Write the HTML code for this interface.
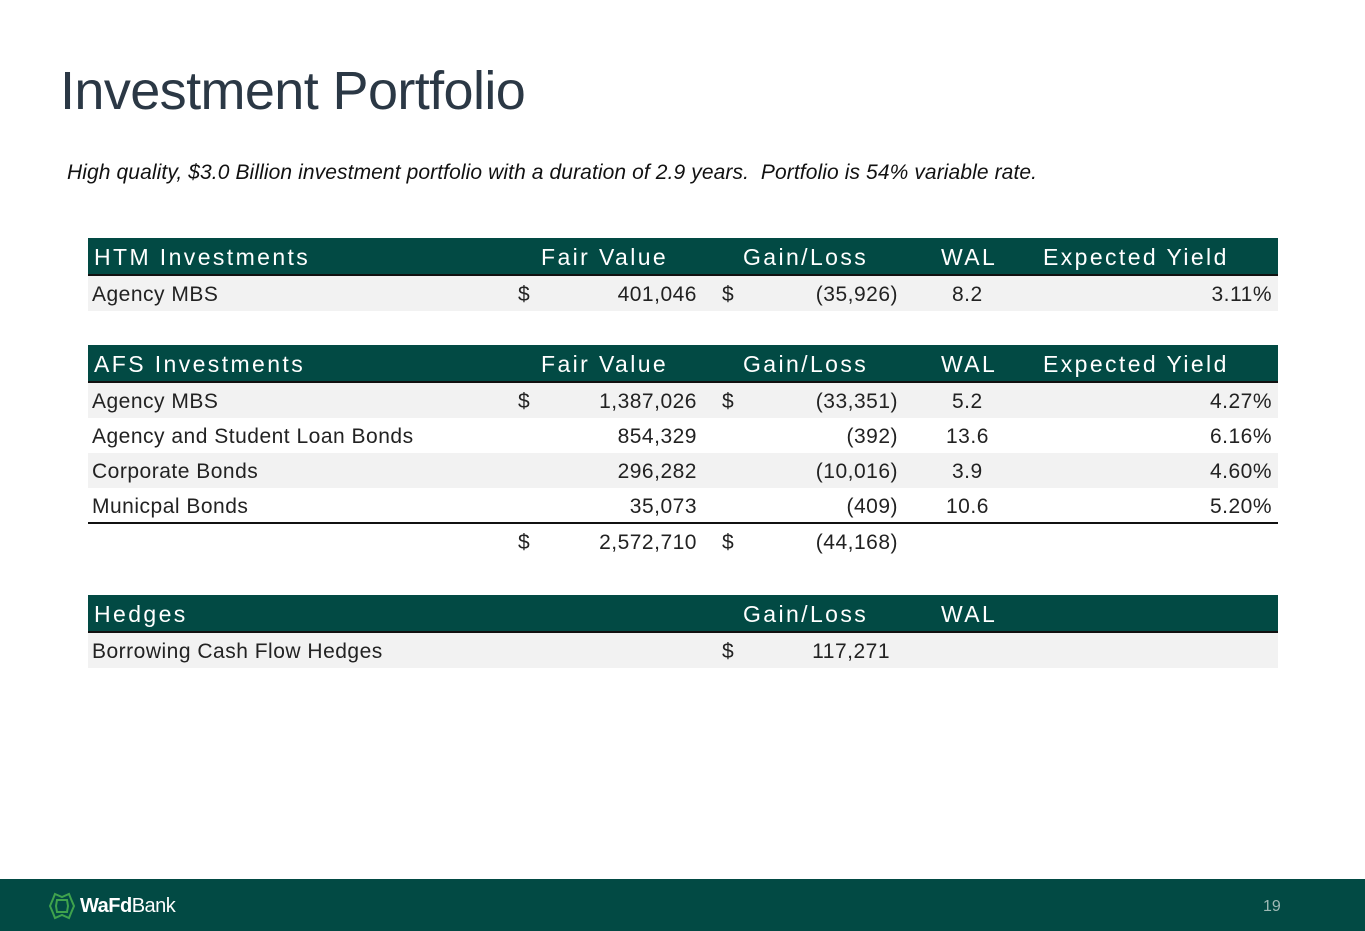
<!DOCTYPE html>
<html><head><style>
body{margin:0;width:1365px;height:931px;background:#fff;position:relative;overflow:hidden;font-family:"Liberation Sans",sans-serif;}
.a{position:absolute;white-space:nowrap;}
.h{position:absolute;left:88px;width:1190px;height:36px;background:#024a44;border-bottom:2px solid #111;}
.h span{position:absolute;top:6px;color:#fff;font-size:23px;letter-spacing:2.4px;}
.r{position:absolute;left:88px;width:1190px;height:35px;}
.g{background:#f2f2f2;}
.r span{position:absolute;top:7px;font-size:21px;color:#222;letter-spacing:0.5px;}
</style></head><body>
<div class="a" style="left:60px;top:60px;font-size:54px;color:#2b3845;letter-spacing:-0.6px;">Investment Portfolio</div>
<div class="a" style="left:67px;top:161px;font-size:21px;font-style:italic;color:#111;letter-spacing:0.1px;">High quality, $3.0 Billion investment portfolio with a duration of 2.9 years.&nbsp; Portfolio is 54% variable rate.</div>

<div class="h" style="top:238px"><span style="left:6px">HTM Investments</span><span style="left:453px">Fair Value</span><span style="left:655px">Gain/Loss</span><span style="left:853px">WAL</span><span style="left:955px">Expected Yield</span></div>
<div class="r g" style="top:276px"><span style="left:4px">Agency MBS</span><span style="left:430px">$</span><span style="right:581px">401,046</span><span style="left:634px">$</span><span style="right:380px">(35,926)</span><span style="left:864px">8.2</span><span style="right:6px">3.11%</span></div>

<div class="h" style="top:345px"><span style="left:6px">AFS Investments</span><span style="left:453px">Fair Value</span><span style="left:655px">Gain/Loss</span><span style="left:853px">WAL</span><span style="left:955px">Expected Yield</span></div>
<div class="r g" style="top:383px"><span style="left:4px">Agency MBS</span><span style="left:430px">$</span><span style="right:581px">1,387,026</span><span style="left:634px">$</span><span style="right:380px">(33,351)</span><span style="left:864px">5.2</span><span style="right:6px">4.27%</span></div>
<div class="r" style="top:418px"><span style="left:4px">Agency and Student Loan Bonds</span><span style="right:581px">854,329</span><span style="right:380px">(392)</span><span style="left:858px">13.6</span><span style="right:6px">6.16%</span></div>
<div class="r g" style="top:453px"><span style="left:4px">Corporate Bonds</span><span style="right:581px">296,282</span><span style="right:380px">(10,016)</span><span style="left:864px">3.9</span><span style="right:6px">4.60%</span></div>
<div class="r" style="top:488px;border-bottom:2px solid #111;height:34px"><span style="left:4px">Municpal Bonds</span><span style="right:581px">35,073</span><span style="right:380px">(409)</span><span style="left:858px">10.6</span><span style="right:6px">5.20%</span></div>
<div class="r" style="top:524px"><span style="left:430px">$</span><span style="right:581px">2,572,710</span><span style="left:634px">$</span><span style="right:380px">(44,168)</span></div>

<div class="h" style="top:595px"><span style="left:6px">Hedges</span><span style="left:655px">Gain/Loss</span><span style="left:853px">WAL</span></div>
<div class="r g" style="top:633px"><span style="left:4px">Borrowing Cash Flow Hedges</span><span style="left:634px">$</span><span style="right:388px">117,271</span></div>

<div class="a" style="left:0;top:879px;width:1365px;height:52px;background:#024a44;"></div>
<svg class="a" style="left:47px;top:891px" width="30" height="30" viewBox="0 0 30 30"><g fill="none" stroke="#3fa34d" stroke-width="2"><path d="M8 3 L15 6 L22 3 L24 8 L27 15 L24 22 L22 27 L15 24 L8 27 L6 22 L3 15 L6 8 Z"/><path d="M10 9 L20 9 L21 15 L20 21 L10 21 L9 15 Z"/></g></svg>
<div class="a" style="left:80px;top:895px;font-size:20px;color:#fff;letter-spacing:-0.5px;"><b>WaFd</b>Bank</div>
<div class="a" style="left:1263px;top:898px;font-size:16px;color:#9fb9b5;">19</div>
</body></html>
